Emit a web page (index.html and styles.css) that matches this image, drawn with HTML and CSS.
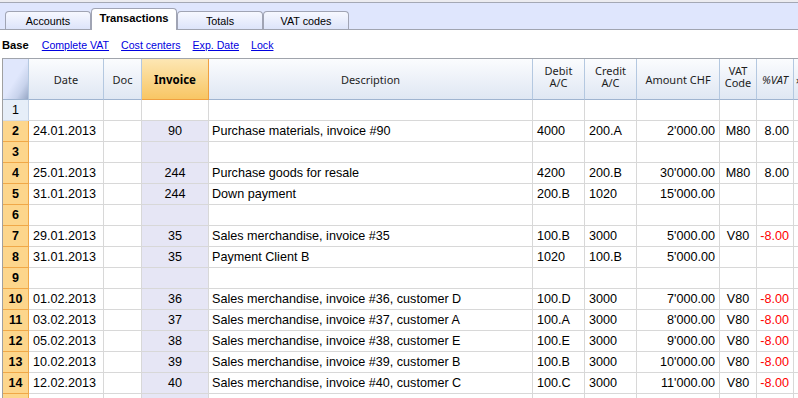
FILE: index.html
```html
<!DOCTYPE html>
<html>
<head>
<meta charset="utf-8">
<link rel="stylesheet" href="styles.css">
</head>
<body>
<div class="tabbar">
  <div class="tab">Accounts</div>
  <div class="tab active">Transactions</div>
  <div class="tab">Totals</div>
  <div class="tab">VAT codes</div>
</div>
<div class="toolbar">
  <span class="view">Base</span>
  <a class="link">Complete VAT</a>
  <a class="link">Cost centers</a>
  <a class="link">Exp. Date</a>
  <a class="link">Lock</a>
</div>
<div class="grid">
  <div class="row head">
    <div class="c rn corner"></div>
    <div class="c date">Date</div>
    <div class="c doc">Doc</div>
    <div class="c inv sel">Invoice</div>
    <div class="c desc">Description</div>
    <div class="c deb two"><span>Debit</span><span>A/C</span></div>
    <div class="c cre two"><span>Credit</span><span>A/C</span></div>
    <div class="c amt">Amount CHF</div>
    <div class="c vc two"><span>VAT</span><span>Code</span></div>
    <div class="c vp it">%VAT</div>
    <div class="c ex">»</div>
  </div>
  <div class="row">
    <div class="c rn plain">1</div><div class="c date"></div><div class="c doc"></div><div class="c inv white"></div><div class="c desc"></div><div class="c deb"></div><div class="c cre"></div><div class="c amt"></div><div class="c vc"></div><div class="c vp"></div><div class="c ex"></div>
  </div>
  <div class="row">
    <div class="c rn">2</div><div class="c date">24.01.2013</div><div class="c doc"></div><div class="c inv">90</div><div class="c desc">Purchase materials, invoice #90</div><div class="c deb">4000</div><div class="c cre">200.A</div><div class="c amt">2'000.00</div><div class="c vc">M80</div><div class="c vp">8.00</div><div class="c ex"></div>
  </div>
  <div class="row">
    <div class="c rn">3</div><div class="c date"></div><div class="c doc"></div><div class="c inv"></div><div class="c desc"></div><div class="c deb"></div><div class="c cre"></div><div class="c amt"></div><div class="c vc"></div><div class="c vp"></div><div class="c ex"></div>
  </div>
  <div class="row">
    <div class="c rn">4</div><div class="c date">25.01.2013</div><div class="c doc"></div><div class="c inv">244</div><div class="c desc">Purchase goods for resale</div><div class="c deb">4200</div><div class="c cre">200.B</div><div class="c amt">30'000.00</div><div class="c vc">M80</div><div class="c vp">8.00</div><div class="c ex"></div>
  </div>
  <div class="row">
    <div class="c rn">5</div><div class="c date">31.01.2013</div><div class="c doc"></div><div class="c inv">244</div><div class="c desc">Down payment</div><div class="c deb">200.B</div><div class="c cre">1020</div><div class="c amt">15'000.00</div><div class="c vc"></div><div class="c vp"></div><div class="c ex"></div>
  </div>
  <div class="row">
    <div class="c rn">6</div><div class="c date"></div><div class="c doc"></div><div class="c inv"></div><div class="c desc"></div><div class="c deb"></div><div class="c cre"></div><div class="c amt"></div><div class="c vc"></div><div class="c vp"></div><div class="c ex"></div>
  </div>
  <div class="row">
    <div class="c rn">7</div><div class="c date">29.01.2013</div><div class="c doc"></div><div class="c inv">35</div><div class="c desc">Sales merchandise, invoice #35</div><div class="c deb">100.B</div><div class="c cre">3000</div><div class="c amt">5'000.00</div><div class="c vc">V80</div><div class="c vp neg">-8.00</div><div class="c ex"></div>
  </div>
  <div class="row">
    <div class="c rn">8</div><div class="c date">31.01.2013</div><div class="c doc"></div><div class="c inv">35</div><div class="c desc">Payment Client B</div><div class="c deb">1020</div><div class="c cre">100.B</div><div class="c amt">5'000.00</div><div class="c vc"></div><div class="c vp"></div><div class="c ex"></div>
  </div>
  <div class="row">
    <div class="c rn">9</div><div class="c date"></div><div class="c doc"></div><div class="c inv"></div><div class="c desc"></div><div class="c deb"></div><div class="c cre"></div><div class="c amt"></div><div class="c vc"></div><div class="c vp"></div><div class="c ex"></div>
  </div>
  <div class="row">
    <div class="c rn">10</div><div class="c date">01.02.2013</div><div class="c doc"></div><div class="c inv">36</div><div class="c desc">Sales merchandise, invoice #36, customer D</div><div class="c deb">100.D</div><div class="c cre">3000</div><div class="c amt">7'000.00</div><div class="c vc">V80</div><div class="c vp neg">-8.00</div><div class="c ex"></div>
  </div>
  <div class="row">
    <div class="c rn">11</div><div class="c date">03.02.2013</div><div class="c doc"></div><div class="c inv">37</div><div class="c desc">Sales merchandise, invoice #37, customer A</div><div class="c deb">100.A</div><div class="c cre">3000</div><div class="c amt">8'000.00</div><div class="c vc">V80</div><div class="c vp neg">-8.00</div><div class="c ex"></div>
  </div>
  <div class="row">
    <div class="c rn">12</div><div class="c date">05.02.2013</div><div class="c doc"></div><div class="c inv">38</div><div class="c desc">Sales merchandise, invoice #38, customer E</div><div class="c deb">100.E</div><div class="c cre">3000</div><div class="c amt">9'000.00</div><div class="c vc">V80</div><div class="c vp neg">-8.00</div><div class="c ex"></div>
  </div>
  <div class="row">
    <div class="c rn">13</div><div class="c date">10.02.2013</div><div class="c doc"></div><div class="c inv">39</div><div class="c desc">Sales merchandise, invoice #39, customer B</div><div class="c deb">100.B</div><div class="c cre">3000</div><div class="c amt">10'000.00</div><div class="c vc">V80</div><div class="c vp neg">-8.00</div><div class="c ex"></div>
  </div>
  <div class="row">
    <div class="c rn">14</div><div class="c date">12.02.2013</div><div class="c doc"></div><div class="c inv">40</div><div class="c desc">Sales merchandise, invoice #40, customer C</div><div class="c deb">100.C</div><div class="c cre">3000</div><div class="c amt">11'000.00</div><div class="c vc">V80</div><div class="c vp neg">-8.00</div><div class="c ex"></div>
  </div>
  <div class="row">
    <div class="c rn"></div><div class="c date"></div><div class="c doc"></div><div class="c inv"></div><div class="c desc"></div><div class="c deb"></div><div class="c cre"></div><div class="c amt"></div><div class="c vc"></div><div class="c vp"></div><div class="c ex"></div>
  </div>
</div>
</body>
</html>
```
FILE: styles.css
```css
html, body {
  margin: 0;
  padding: 0;
  background: #ffffff;
  overflow: hidden;
  width: 798px;
  height: 398px;
}
body {
  font-family: "Liberation Sans", Arial, sans-serif;
}
.tabbar {
  height: 26px;
  background: #dfe6fd;
  border-top: 2px solid #ececf0;
  box-shadow: inset 0 1px 0 #a4a8b4;
  border-bottom: 1px solid #a0a4b0;
  display: flex;
  align-items: flex-end;
  padding-left: 5px;
  padding-top: 1px;
  box-sizing: content-box;
}
.tab {
  width: 86px;
  height: 18px;
  box-sizing: border-box;
  border: 1px solid #a0a4b4;
  border-bottom: none;
  border-radius: 4px 4px 0 0;
  background: linear-gradient(#f6f8ff, #dde4fa);
  font-size: 10.8px;
  color: #000;
  text-align: center;
  line-height: 19px;
}
.tab.active {
  height: 22px;
  margin-bottom: -1px;
  background: #ffffff;
  font-weight: bold;
  line-height: 19px;
  font-size: 11.2px;
}
.toolbar {
  height: 28px;
  display: flex;
  align-items: center;
  gap: 12px;
  padding-left: 2px;
  font-size: 10.6px;
  padding-top: 1px;
  box-sizing: border-box;
}
.view {
  font-weight: bold;
  color: #000;
  font-size: 11.2px;
  margin-right: 1px;
}
.link {
  color: #0000e0;
  text-decoration: underline;
}
.grid {
  margin-left: 2px;
  border-left: 1px solid #a0a0a0;
  border-top: 1px solid #a0a4ac;
  width: 900px;
}
.row {
  display: flex;
  height: 21px;
}
.c {
  box-sizing: border-box;
  height: 21px;
  border-right: 1px solid #d8d8d8;
  border-bottom: 1px solid #d8d8d8;
  font-size: 12.6px;
  line-height: 20px;
  padding: 0 3px 0 4px;
  white-space: nowrap;
  overflow: hidden;
  color: #000;
  flex: none;
}
.rn { width: 26px; text-align: center; background: #fdd68c; border-right-color: #f0a848; border-bottom-color: #f0a848; font-weight: bold; padding: 0; font-size: 12.5px; }
.rn.plain { background: #e6eef8; font-weight: normal; border-right-color: #c4d2e4; border-bottom-color: #d4dce8; }
.date { width: 75px; }
.doc { width: 38px; }
.inv { width: 67px; text-align: center; background: #e6e6f5; padding: 0; }
.inv.white { background: #ffffff; }
.desc { width: 324px; padding-left: 3px; }
.deb { width: 52px; }
.cre { width: 52px; }
.amt { width: 83px; text-align: right; padding-right: 4px; }
.vc { width: 37px; text-align: center; padding: 0; }
.vp { width: 37px; text-align: right; padding-right: 4px; padding-left: 0; }
.vp.neg { color: #ff0000; }
.ex { width: 80px; }

.head { height: 41px; }
.head .c {
  height: 41px;
  background: linear-gradient(#fbfcfe, #dfe7f3);
  border-right-color: #b4c8e0;
  border-bottom-color: #9fb4d0;
  font-family: "Noto Sans", "Open Sans", sans-serif;
  font-size: 11px;
  line-height: 13px;
  color: #1e1e1e;
  display: flex;
  align-items: center;
  justify-content: center;
  text-align: center;
  padding: 0;
}
.head .two {
  flex-direction: column;
  line-height: 12px;
  padding-bottom: 5px;
}
.head .two span {
  display: block;
  height: 12px;
}
.head .corner {
  background: linear-gradient(to bottom right, #e0e7fc 50%, #c8d3ec 75%, #98a8c6 100%);
  border-right-color: #b4c8e0;
}
.head .inv.sel {
  background: linear-gradient(#fde7b4, #f8c664);
  border-right-color: #f0a040;
  border-bottom-color: #f0a040;
  font-weight: bold;
  font-size: 11.5px;
  color: #000;
}
.head .it { font-style: italic; }
.head .ex { justify-content: flex-start; padding-left: 2px; }
```
